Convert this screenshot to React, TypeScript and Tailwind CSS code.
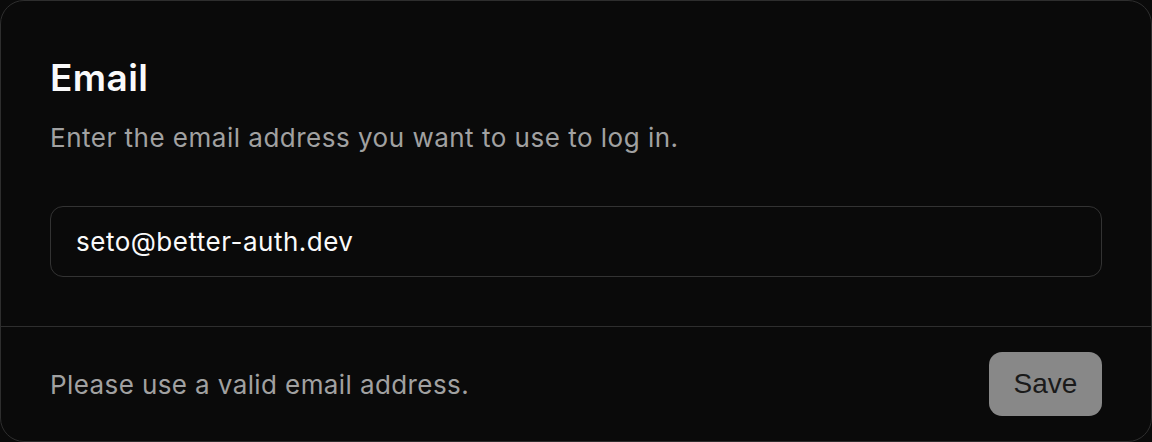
export default function App() {
  return (
    <div className="h-[442px] w-[1152px] bg-[#0a0a0a]" style={{ fontFamily: "Inter, 'Noto Sans', sans-serif" }}>
      <div className="flex h-full w-full flex-col rounded-[24px] border border-[#2e2e2e] bg-[#0a0a0a]">
        {/* card body */}
        <div className="flex flex-col px-[49px] pt-[53px] pb-[49px]">
          <h2 className="text-[37px] font-semibold leading-[48px] tracking-[0.4px] text-[#fafafa]">Email</h2>
          <p className="mt-[19px] text-[26px] leading-[34px] tracking-[0.5px] text-[#a1a1a1]">
            Enter the email address you want to use to log in.
          </p>
          <input
            type="email"
            defaultValue="seto@better-auth.dev"
            className="mt-[51px] h-[71px] w-full rounded-[13px] border border-[#333333] bg-transparent px-[25px] text-[26px] tracking-[0.5px] text-[#fafafa] outline-none"
          />
        </div>

        {/* footer */}
        <div className="flex flex-1 items-center justify-between border-t border-[#2e2e2e] pl-[49px] pr-[49px]">
          <p className="text-[26px] tracking-[0.4px] text-[#a1a1a1]">Please use a valid email address.</p>
          <button
            disabled
            className="h-[64px] w-[113px] rounded-[13px] bg-[#888888] text-[28px] text-[#1a1a1a]"
            style={{ fontFamily: "'Liberation Sans', Arial, sans-serif" }}
          >
            Save
          </button>
        </div>
      </div>
    </div>
  );
}
